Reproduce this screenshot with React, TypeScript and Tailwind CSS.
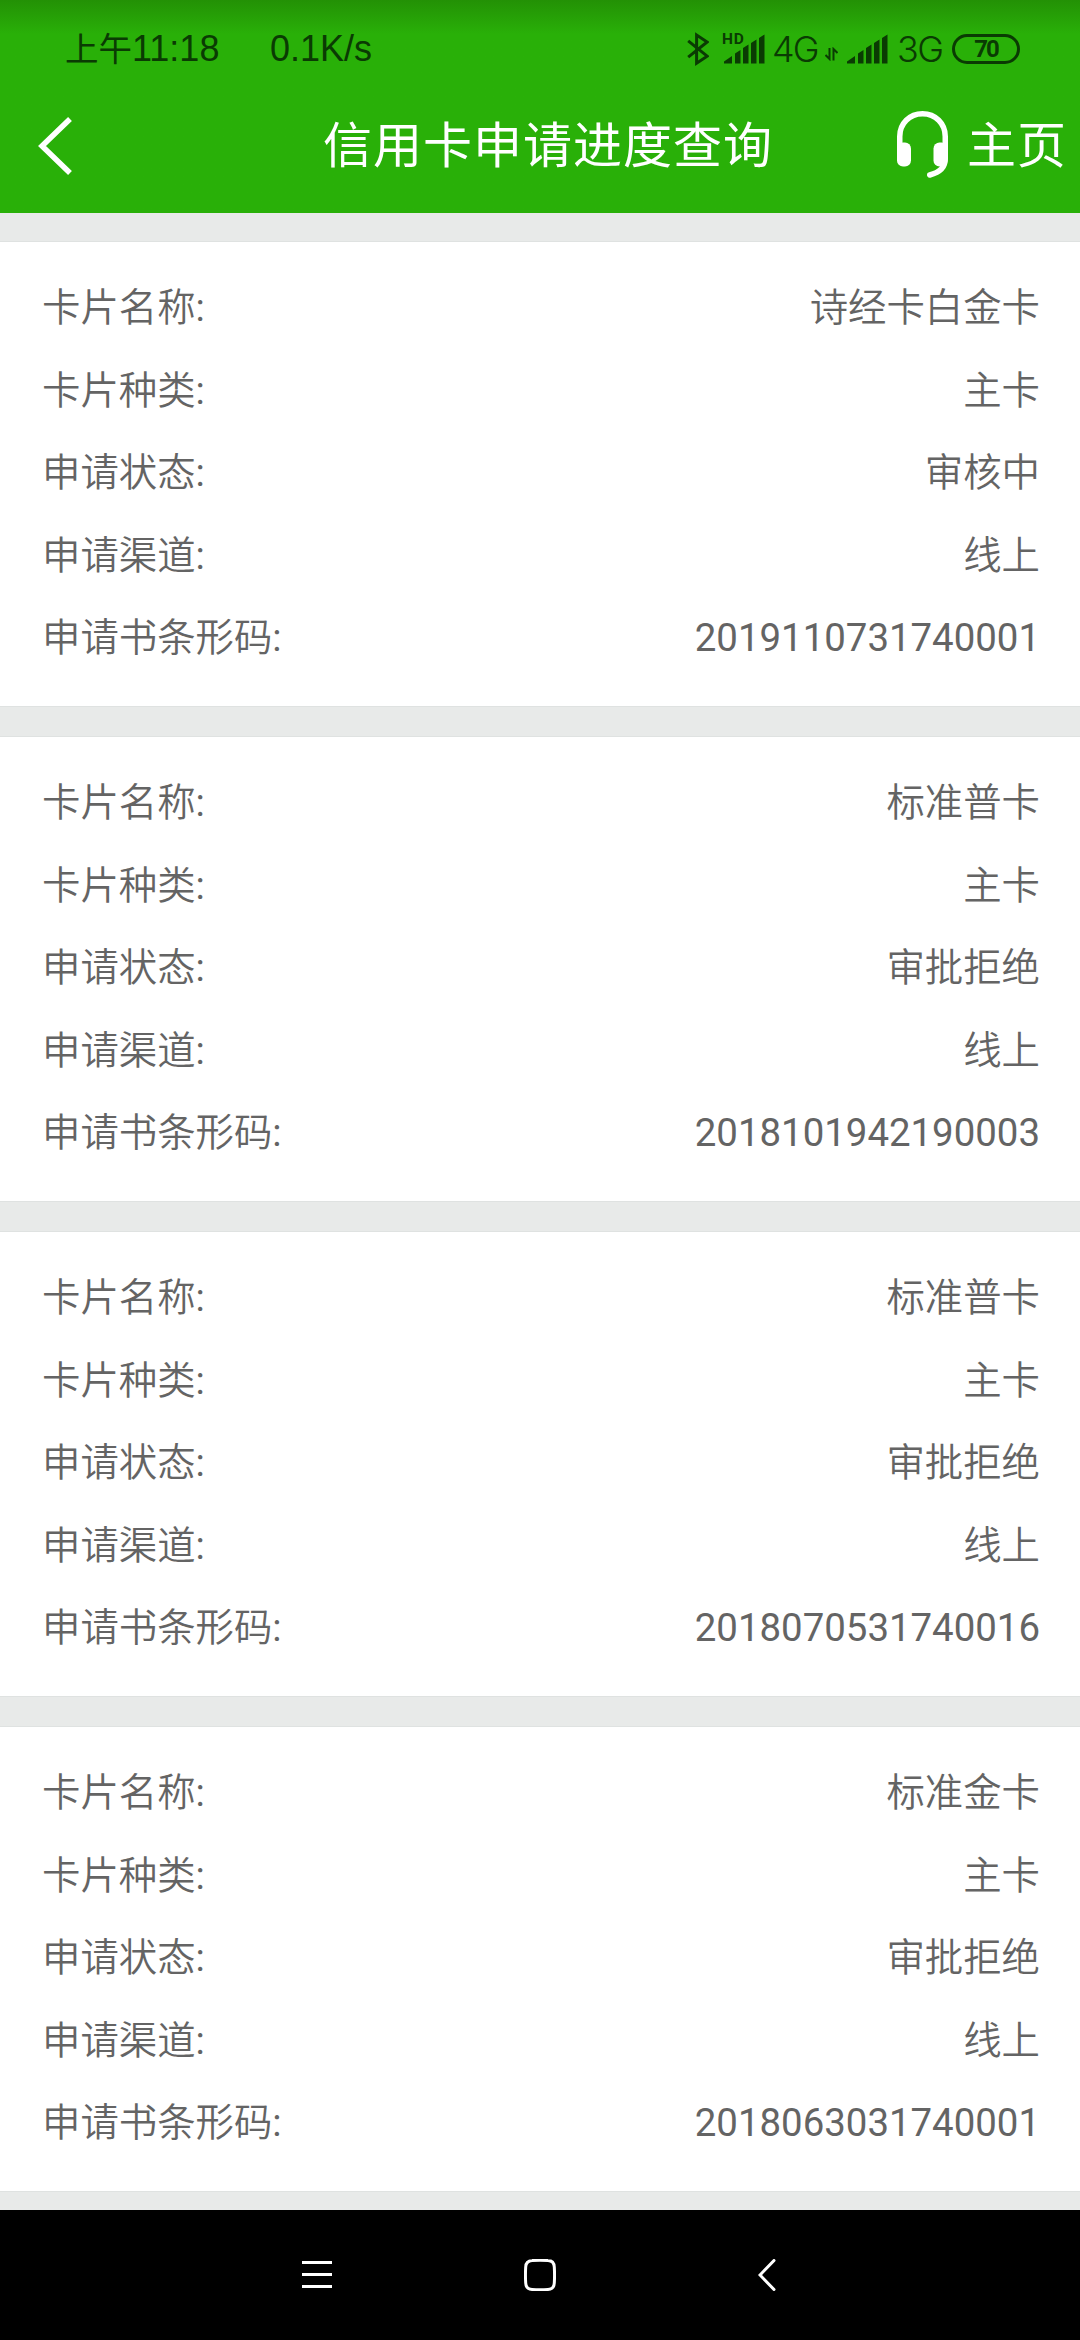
import React from "react";

interface Application {
  cardName: string;
  cardType: string;
  status: string;
  channel: string;
  barcode: string;
}

const applications: Application[] = [
  { cardName: "诗经卡白金卡", cardType: "主卡", status: "审核中", channel: "线上", barcode: "2019110731740001" },
  { cardName: "标准普卡", cardType: "主卡", status: "审批拒绝", channel: "线上", barcode: "2018101942190003" },
  { cardName: "标准普卡", cardType: "主卡", status: "审批拒绝", channel: "线上", barcode: "2018070531740016" },
  { cardName: "标准金卡", cardType: "主卡", status: "审批拒绝", channel: "线上", barcode: "2018063031740001" },
];

export default function App() {
  return (
    <div className="flex h-[2340px] w-[1080px] flex-col overflow-hidden bg-[#e8eae9] font-[Roboto,'Noto_Sans_CJK_SC',sans-serif]">
      <header className="h-[213px] shrink-0 bg-[#29b008] bg-linear-to-b from-[#239105] from-0% to-[#29b008] to-[16%]">
        <StatusBar />
        <TitleBar />
      </header>

      {/* APPLICATION LIST */}
      <main className="flex h-[1997px] flex-col gap-[31px] overflow-hidden pt-[29px]">
        {applications.map((item) => (
          <ApplicationCard key={item.barcode} item={item} />
        ))}
      </main>

      <NavigationBar />
    </div>
  );
}

/* HELPER COMPONENTS */

function StatusBar() {
  return (
    <div className="flex h-[98px] items-center justify-between pr-[60px] pl-[65px] font-['Liberation_Sans','Noto_Sans_CJK_SC',sans-serif] text-[36px] leading-none text-[#0a3b03]">
      <div className="flex items-center">
        <span className="w-[205px] whitespace-nowrap">
          <span className="text-[33.5px]">上午</span>11:18
        </span>
        <span className="whitespace-nowrap">0.1K/s</span>
      </div>
      <div className="flex items-center">
        <BluetoothIcon />
        <SignalIcon hd />
        <span className="ml-[7px] w-[53px] font-[Inter] font-[350] tracking-[-2px]">4G</span>
        <DataArrowsIcon />
        <SignalIcon />
        <span className="ml-[9px] w-[55px] font-[Inter] font-[350] tracking-[-1.5px]">3G</span>
        <div className="flex h-[30px] w-[68px] items-center justify-center rounded-full border-3 border-current font-['Roboto'] text-[24px] font-bold tracking-[-2px]">
          70
        </div>
      </div>
    </div>
  );
}

function TitleBar() {
  return (
    <div className="grid h-[96px] grid-cols-[1fr_450px_1fr] items-center text-[49px] leading-none tracking-[1px] text-white">
      <button className="pl-[38px]">
        <BackIcon />
      </button>
      <h1 className="relative left-[8px] whitespace-nowrap">信用卡申请进度查询</h1>
      <div className="flex items-center justify-end gap-[19px] pr-[13px]">
        <HeadsetIcon />
        <span className="whitespace-nowrap">主页</span>
      </div>
    </div>
  );
}

function ApplicationCard({ item }: { item: Application }) {
  return (
    <section className="h-[464px] shrink-0 bg-white pt-[25px] pr-[40px] pl-[42px] shadow-[0_0_0_1px_#dfe2e1]">
      <InfoRow label="卡片名称" value={item.cardName} />
      <InfoRow label="卡片种类" value={item.cardType} />
      <InfoRow label="申请状态" value={item.status} />
      <InfoRow label="申请渠道" value={item.channel} />
      <InfoRow label="申请书条形码" value={item.barcode} valueClass="font-normal" />
    </section>
  );
}

function InfoRow({ label, value, valueClass = "font-[350]" }: { label: string; value: string; valueClass?: string }) {
  return (
    <div className="flex h-[82.5px] items-center justify-between text-[38.4px] leading-none text-[#646464]">
      <span className="font-[350]">
        {label}
        <span className="font-normal">:</span>
      </span>
      <span className={valueClass}>{value}</span>
    </div>
  );
}

function NavigationBar() {
  return (
    <nav className="flex h-[130px] shrink-0 items-center bg-black pl-[302px] text-white">
      <MenuIcon />
      <HomeIcon />
      <NavBackIcon />
    </nav>
  );
}

/* INLINE ICONS */
const BluetoothIcon = () => (
  <svg viewBox="0 0 22 34" fill="none" stroke="currentColor" strokeWidth="3" className="mr-[15px] h-[34px] w-[22px]">
    <path d="M1.2 8.8l19 15.4-10.6 7V3l10.6 7L1.2 25.2" />
  </svg>
);

const SignalIcon = ({ hd = false }: { hd?: boolean }) => (
  <svg viewBox="0 0 41 32" fill="currentColor" className="h-[32px] w-[41px] overflow-visible">
    {hd && (
      <text x="-2" y="11" fontSize="15.5" fontWeight="700" fontFamily="Roboto" letterSpacing="0.8">
        HD
      </text>
    )}
    <path d="M0 30.5v-2l8-5.5v7.5zM11 30.5V20.5l5.5-3.5v13.5zM19 30.5V15l5.5-3.5v19zM27 30.5V10l5.5-3.5v24zM35 30.5V5l5.500-3.500v29z" />
  </svg>
);

const DataArrowsIcon = () => (
  <svg viewBox="0 0 13 14" fill="none" stroke="currentColor" strokeWidth="2" className="mt-[10px] mr-[9px] h-[14px] w-[13px]">
    <path d="M4.500 1v11L.5 8M8.500 13.500V2l4 4" />
  </svg>
);

const BackIcon = () => (
  <svg viewBox="0 0 34 58" fill="none" stroke="currentColor" strokeWidth="5.5" className="h-[58px] w-[34px]">
    <path d="M32 2L4 29l28 27" />
  </svg>
);

const HeadsetIcon = () => (
  <svg viewBox="0 0 51 67" fill="currentColor" className="mb-[3px] h-[67px] w-[51px]">
    <path d="M2.750 46V25.500C2.750 12.500 12.500 2.750 25.500 2.750s22.750 9.750 22.750 22.750V48c0 8-6 13.500-15.500 16" fill="none" stroke="currentColor" strokeWidth="5.5" strokeLinecap="round" />
    <rect x="0" y="31.5" width="14" height="24" rx="6" />
    <rect x="36.5" y="31.5" width="14" height="24" rx="6" />
  </svg>
);

const MenuIcon = () => (
  <svg viewBox="0 0 30 32" stroke="currentColor" strokeWidth="3" className="h-[32px] w-[30px]">
    <path d="M0 3.5h30M0 15.5h30M0 27.5h30" />
  </svg>
);

const HomeIcon = () => (
  <svg viewBox="0 0 32 32" fill="none" stroke="currentColor" strokeWidth="3" className="ml-[192px] h-[32px] w-[32px]">
    <path d="M8 1.5Q16 .9 24 1.5 30 1.7 30.3 8q.5 8 0 16-.3 6.2-6.3 6.5-8 .6-16 0Q2 30.2 1.7 24q-.5-8 0-16Q2 1.8 8 1.5z" />
  </svg>
);

const NavBackIcon = () => (
  <svg viewBox="0 0 18 32" fill="none" stroke="currentColor" strokeWidth="3" strokeLinecap="round" className="ml-[202px] h-[32px] w-[18px]">
    <path d="M16 1.5L2 16l14 14.5" />
  </svg>
);
